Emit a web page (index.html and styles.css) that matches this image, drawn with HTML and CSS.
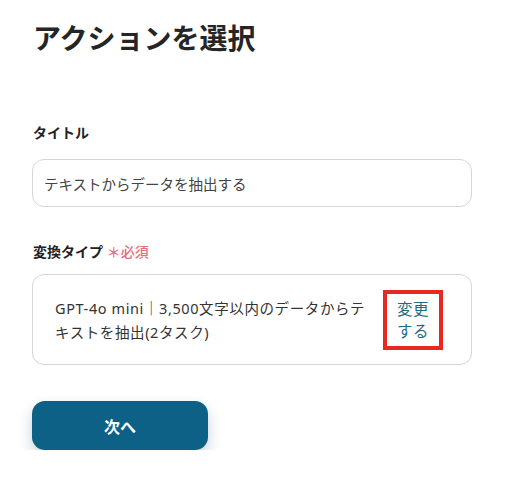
FILE: index.html
```html
<!DOCTYPE html>
<html lang="ja">
<head>
<meta charset="utf-8">
<link rel="stylesheet" href="styles.css">
</head>
<body>
<div class="page">
  <h1 class="title">アクションを選択</h1>
  <div class="field">
    <div class="label">タイトル</div>
    <div class="input">テキストからデータを抽出する</div>
  </div>
  <div class="field field-type">
    <div class="label">変換タイプ <span class="req">＊必須</span></div>
    <div class="select">
      <div class="select-text">GPT-4o mini｜3,500文字以内のデータからテキストを抽出(2タスク)</div>
      <div class="change-wrap"><span class="change">変更<br>する</span></div>
    </div>
  </div>
  <button class="next">次へ</button>
</div>
</body>
</html>
```
FILE: styles.css
```css
* { box-sizing: border-box; }
html, body { margin: 0; background: #ffffff; }
body {
  font-family: "Noto Sans", "Noto Sans CJK JP", sans-serif;
  color: #2a2a2a;
}
.page {
  padding: 18px 37px 0 32px;
  width: 509px;
}
.title {
  margin: 0 0 0 1px;
  font-size: 28px;
  font-weight: 700;
  line-height: 40px;
  color: #252525;
}
.field { margin-top: 65px; }
.label {
  font-size: 14px;
  font-weight: 700;
  line-height: 20px;
  color: #222;
  margin-left: 1px;
}
.req {
  color: #e56c7a;
  font-size: 14px;
  font-weight: 500;
}
.input {
  margin-top: 16px;
  height: 48px;
  border: 1px solid #d6d6d6;
  border-radius: 12px;
  padding: 0 11px;
  display: flex;
  align-items: center;
  font-size: 14.5px;
  color: #444;
}
.field-type { margin-top: 35px; }
.select {
  margin-top: 12px;
  height: 91px;
  border: 1px solid #d6d6d6;
  border-radius: 12px;
  padding: 0 28px 0 22px;
  display: flex;
  align-items: center;
  justify-content: space-between;
  font-size: 14.5px;
  letter-spacing: 0.6px;
  line-height: 24px;
  color: #333;
}
.select-text { width: 322px; flex-shrink: 0; }
.change-wrap {
  border: 4px solid #e62a22;
  width: 60px;
  height: 60px;
  display: flex;
  align-items: center;
  justify-content: center;
  flex-shrink: 0;
}
.change {
  color: #1d6a86;
  font-size: 15.5px;
  line-height: 22px;
  letter-spacing: 0.5px;
}
.next {
  margin-top: 36px;
  width: 176px;
  height: 49px;
  border: none;
  border-radius: 13px;
  background: #0d6186;
  color: #fff;
  font-family: inherit;
  font-size: 16px;
  font-weight: 700;
  box-shadow: 0 6px 14px rgba(0, 40, 70, 0.22);
}
```
